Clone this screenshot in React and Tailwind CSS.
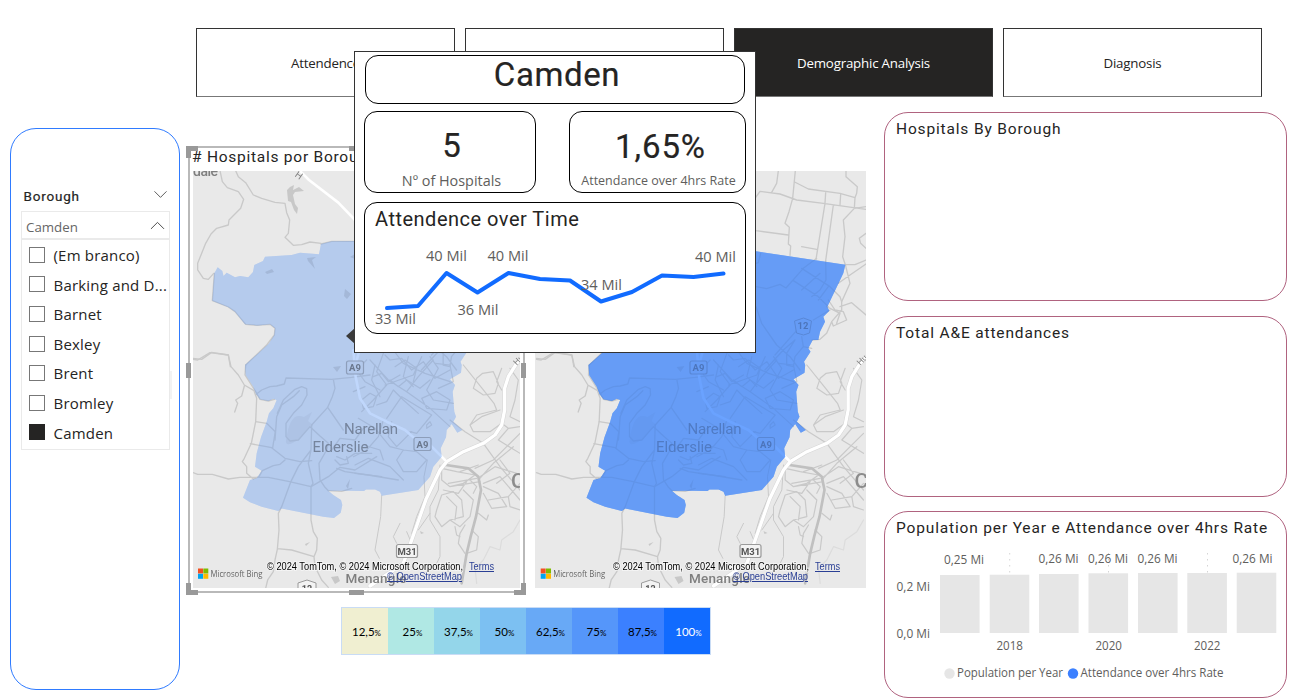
import React from "react";
import { ChevronDown, ChevronUp } from "lucide-react";

const DIN = "font-[Roboto,sans-serif]";
const MAP_FONT = "font-[Roboto,sans-serif]";

const BOROUGH =
  "M321 244 331.7 241.3 355 241 412.5 251.3 501.8 264.7 499.8 273.3 483.8 306.7 485.8 310.7 479.8 316.7 481.5 321.7 476.5 331.7 474.8 340 469.2 340 464.8 348.3 467 351.7 460.5 361.7 461.7 365 461 372.7 450 379.3 455 385 452.7 391.7 454.3 411.7 456 416.7 453.3 421.7 462.3 430 457.3 432.7 451.7 424 446.7 430 446 437.3 440.7 448.3 441.7 456.7 433.3 466.7 430 476.7 418.3 490 381.7 495.7 380 491.7 375 489.5 366 489.5 364 491 350 490.7 328.3 490.7 333.3 495 341 500 342.3 505 340.7 512.7 334 518 323.3 516.7 281.7 508.5 278.3 511 261.7 506.7 250 502.3 243 497.7 250 480 256.7 478.3 261.7 470.7 255 466.7 256.7 453.3 261 437.3 266.7 421.7 269 413.3 273.3 408.3 276.7 400 273.3 398.7 268.3 401 260 399.3 256 394 253.3 386.7 245.7 375 245 365 260 351.7 269 343.5 274.3 335 275 328.3 270 324.3 258 325.5 245 324.3 235 311.7 228 307 212.3 300.7 214.3 273.3 217.7 267.3 222.3 271 223.5 276 226.7 272.7 235 277.3 240 276 248.3 277.3 253 272 254.3 265 263 261 265 256.7 291.7 255 300 252.7 319 254.3Z";

function Shield({ x, y, w = 17, label, tone = "#f3f3f3" }) {
  return (
    <g>
      <rect x={x - w / 2} y={y - 6.5} width={w} height="13" rx="2" fill={tone} stroke="#9a9a9a" strokeWidth="1.2" />
      <text x={x} y={y + 3.6} textAnchor="middle" fontSize="9.5" fontWeight="700" fill="#555" className={MAP_FONT}>{label}</text>
    </g>
  );
}

function BingMap({ viewBox, width, tint, fill, fillOpacity, bingX, copyX, copyWidth }) {
  return (
    <svg width={width} height="417" viewBox={viewBox} className="isolate block bg-[#e9e9e9]">
      <rect x="190" y="171" width="340" height="417" fill="#e9e9e9" />
      <g fill="none" stroke="#c9c9c9" strokeLinejoin="round" strokeLinecap="round">
        <g transform="translate(185 140) scale(.33333)" strokeWidth="4">
          <path d="M105 92 112 125 127 143 160 155 176 178 167 205 132 240 130 255 95 265 78 282 62 310 38 370 38 390 55 415 70 418 86 400M152 92 160 110 182 128 205 165 230 175 270 187 300 190 305 218 314 240 310 280 300 292 325 316 350 314 375 306 408 310" />
          <path d="M408 312 440 304 510 304M88 400 82 482 130 501 150 515 182 553 215 556 255 553 270 565 268 585 245 615 182 675" />
          <path d="M344 92 372 120 460 188 510 240 560 330 610 420 600 500 540 570 510 680" stroke="#fff" strokeWidth="8" />
          <path d="M24 655 50 658 80 637 130 645 136 680" />
        </g>
        <g transform="translate(185 350) scale(.33333)" strokeWidth="4">
          <path d="M24 28 38 30 75 8 130 15 138 50 160 75 178 105 207 122 215 145 212 215 199 280 178 325 172 335 185 350 185 370 205 387M178 108 170 138 152 150 158 160 149 186M24 368 38 373 82 373 130 387 165 382 250 382 310 394 378 410 430 380 465 352 510 360 575 320" />
          <path d="M182 45 180 75 212 125 225 148 250 153 268 148M212 134 230 120 255 110 275 108 298 102 303 84 440 88 500 82 555 75M445 88 450 115 442 140 428 172 380 225M428 172 475 240M212 215 245 220 271 245 263 293M196 281 260 293 300 325 345 335 380 332M205 387 222 380 232 362 265 347 285 343 300 330" />
          <path d="M343 122 325 140 290 165 275 200 270 270M303 260 303 220 325 190 350 165 366 135 365 116 350 110 330 118 295 150 277 190M303 260 315 273 340 270 375 230 405 258 430 280 425 300 402 340 405 390 420 412 430 422" />
          <path d="M380 225 378 300 340 350 318 394 290 470 280 490 282 540 277 598 270 630 265 665 248 690 242 715M378 300 370 340 384 400 378 410 378 510 385 545 397 565 395 600 387 620 390 650 410 690 430 712M277 596 320 600 387 620" />
          <path d="M440 300 465 265 510 270 535 235M455 320 480 330 510 310 560 310M455 355 480 365 550 375 640 390M450 330 465 345 490 340 485 320M430 422 470 424 500 415" />
        </g>
        <g transform="translate(350 350) scale(.33333)" strokeWidth="3.6">
          <path d="M60 30 115 90 170 125 240 175 300 230M100 10 80 65 110 105 70 150 35 185M130 0 160 40 225 70 300 95M215 20 190 75 105 105M170 125 205 80 250 30M35 150 60 130 80 140 70 170 40 175 35 150M110 205 155 140 245 195 200 250 180 245M215 145 260 125 300 150 290 180 230 175 215 145M120 90 145 110 170 90 210 115 240 90M50 30 20 60 45 95 90 120M135 50 165 30 200 55 190 95M255 40 300 45 310 95 265 115" />
          <path d="M105 15 120 30 155 25 185 60 220 35 255 85 300 60M70 80 95 70 115 95 150 75M240 20 265 55 230 120 250 150 310 160M80 165 110 155 130 120 160 150 205 190M25 205 75 235 120 290 160 300M100 210 85 260 50 300 10 320M125 215 115 260 140 290 185 245M15 345 55 325 120 350 160 390M15 370 95 380M40 285 90 300 100 330M160 300 140 330 160 365 200 365 230 330 200 305 160 300M230 235 245 225 240 215 230 225 230 235M45 110 10 125M75 45 65 90 90 140M175 20 160 80 190 110" />
          <path d="M340 45 400 120 432 160 440 180 380 195 360 225 370 245 420 245 455 220M398 70 430 65 445 100 435 130 400 135 370 115 380 85 398 70M455 55 440 95 455 120M480 55 505 90 495 150 480 200 510 215M455 220 475 235 510 230M300 210 345 245 400 280 450 350 510 420M360 225 395 200 450 180M475 235 445 270 510 310M510 250 470 290 430 330 375 355" />
          <path d="M275 355 320 365 375 375 340 400 300 410 275 390 275 360M385 390 430 340 490 290M330 365 385 345M390 380 435 350 500 370M400 400 450 380 510 450M400 410 445 430 470 470 425 475 400 430M280 420 325 430 350 395M260 480 275 435 310 425 335 450 340 500 300 510 275 530 255 500 260 480M300 510 330 530 360 500 370 450 340 420M290 440 320 470 315 510M415 450 475 440 510 400M450 330 480 370 440 400M475 440 480 470 510 480M385 490 410 510 415 495M345 525 330 550 325 580 345 610M365 540 385 560 380 600 350 610M315 530 320 555 330 560M360 390 380 410 370 430M295 400 380 385M300 410 390 395" />
          <path d="M288 345 355 355 385 380 393 420 378 500 362 560 350 610 335 700" stroke="#c0c0c0" strokeWidth="8" />
          <path d="M95 437 92 500 75 600 88 625M232 330 222 380 225 440 200 500 185 550M270 345 265 420 240 470 240 510 270 560 270 620 255 650M150 520 130 560 140 580M170 545 185 580M240 490 205 540" strokeWidth="3" />
          <path d="M510 510 490 545 455 570 450 600 420 590 400 630 375 655 380 700" stroke="#dcdcdc" />
          <path d="M60 708 160 640 178 590 228 448 270 360 290 335 340 305 400 280 435 255 455 225 464 180 464 115 475 80 500 40 540 0" stroke="#d6d6d6" strokeWidth="13" />
          <path d="M60 708 160 640 178 590 228 448 270 360 290 335 340 305 400 280 435 255 455 225 464 180 464 115 475 80 500 40 540 0" stroke="#fff" strokeWidth="10" />
          <path d="M10 0 17 80 30 145 60 190 110 215 165 240 190 262 240 285 290 335" stroke="#fff" strokeWidth="8" />
        </g>
        <g transform="translate(396.5 140) scale(.33333)" strokeWidth="4">
          <path d="M115 92 110 130 95 157M166 92 158 175 147 215 135 250 148 262 145 312 152 318 150 346M164 126 205 147 300 160 345 173 350 160 352 140 318 110 318 92M20 210 60 154 120 162 170 180 250 190 378 208M257 158 255 190 228 358M302 163 300 195M345 173 343 205 378 200M280 195 257 362M343 205 310 240 315 290 308 350 316 374 330 430 305 485 305 510 275 545 280 558 320 540 310 515 285 510 265 480M20 265 48 272 145 285M185 320 230 328M378 280 358 295 362 310 378 325M316 374 345 374 378 360M295 430 330 405 378 372M300 500 335 488 378 525M260 500 300 520 290 550M216 600 240 598 260 580 275 545" />
          <path d="M48 440 80 446 120 433 138 444 190 385 230 355M62 340 55 368 48 370M185 385 270 440 300 470 305 485M160 422 235 470 265 500M240 400 185 450M265 440 235 480M257 362 258 420 240 450 215 470M48 500 65 550 110 615 150 650 180 690M165 600 130 630 75 690M185 590 190 620 165 650 160 680 140 675 140 640 165 600M220 540 270 510M190 620 215 625M180 560 105 645" />
        </g>
      </g>
      <g fill="#c8c8c8" stroke="none">
        <path d="M290 187 294 185 293 190 299 187 304 191 295 192 293 195 295 204 298 208 297 214 294 210 291 202 288 201 287 190Z" />
        <path d="M265 272 272 269 274 272 267 274ZM307 258 316 257 312 260 315 269 308 261ZM345 289 351 294 347 299 344 296ZM350 257 355 254V259ZM333 367 341 366 337 372ZM346 486 350 479 348 489ZM305 544 310 542 306 546ZM331 577 338 576 340 581 335 584ZM420 531 424 533 421 534Z" />
        <path d="M286 441C289 420 294 413 304 417L312 412 308 421 313 425 305 432 300 438C292 445 285 446 286 441Z" opacity=".4" />
      </g>
      <g fill="#7f7f7f" className={MAP_FONT}>
        <text x="193" y="176" fontSize="14" fontWeight="500" textLength="25">dale</text>
        <text x="294.5" y="177" fontSize="9.5" transform="rotate(35 296 176)">H</text>
        <text x="515.5" y="365" fontSize="8.5" transform="rotate(-45 517 364)">Hu</text>
        <text x="511" y="488" fontSize="21" fontWeight="500" fill="#8c8c8c">C</text>
        <text x="345.5" y="582.5" fontSize="13.5" fontWeight="500" textLength="61">Menangle</text>
      </g>
      <Shield x={355} y={367.5} label="A9" tone="#e6e6e6" />
      <Shield x={422.5} y={444} label="A9" tone="#e6e6e6" />
      <Shield x={407} y={551} w={21} label="M31" />
      <path d="M451 321 460 318 468 321 466 333 460 335 453 333Z" fill="#e6e6e6" stroke="#9a9a9a" />
      <text x="459.5" y="329" textAnchor="middle" fontSize="9.5" fontWeight="700" fill="#555" className={MAP_FONT}>12</text>
      <path d="M298 588V583L307 580 316 583V588" fill="#f3f3f3" stroke="#9a9a9a" />
      <text x="307" y="592" textAnchor="middle" fontSize="9" fontWeight="700" fill="#555" className={MAP_FONT}>12</text>
      <g fill="#6c6c6c" fontSize="15" className={MAP_FONT}>
        <text x="344" y="434.3" textLength="54">Narellan</text>
        <text x="312.5" y="452.3" textLength="56">Elderslie</text>
      </g>
      <path d={BOROUGH} fill={tint} className="mix-blend-multiply" />
      <path d={BOROUGH} fill={fill} fillOpacity={fillOpacity} />
      <g transform={`translate(${bingX} 568.5)`}>
        <path fill="#f25022" d="M0 0h5v5H0z" />
        <path fill="#7fba00" d="M5.3 0h5v5h-5z" />
        <path fill="#00a4ef" d="M0 5.3h5v5H0z" />
        <path fill="#ffb900" d="M5.3 5.3h5v5h-5z" />
        <text x="12.5" y="8.6" fontSize="9" fill="#666" textLength="52" lengthAdjust="spacingAndGlyphs" className="font-['Open_Sans',sans-serif]">Microsoft Bing</text>
      </g>
      <g fontSize="10" className="font-['Liberation_Sans',sans-serif]">
        <text x={copyX} y="570" textLength={copyWidth} lengthAdjust="spacingAndGlyphs" stroke="#f4f4f4" strokeWidth="2" paintOrder="stroke">© 2024 TomTom, © 2024 Microsoft Corporation,</text>
        <text x={copyX + 202} y="570" fill="#2a3f95" textDecoration="underline" textLength="25" lengthAdjust="spacingAndGlyphs">Terms</text>
        <text x={copyX + 120} y="580" fill="#2a3f95" textDecoration="underline" textLength="75" lengthAdjust="spacingAndGlyphs">© OpenStreetMap</text>
      </g>
    </svg>
  );
}

function Tab({ children, active }) {
  return (
    <div className={`flex h-[69px] w-[259px] items-center justify-center border border-[#333] border-b-[#777] pt-[2px] text-[13.3px] tracking-[-0.2px] ${active ? "bg-[#252423] text-white" : "bg-white text-[#252423]"}`}>
      {children}
    </div>
  );
}

const OPTIONS = ["(Em branco)", "Barking and D...", "Barnet", "Bexley", "Brent", "Bromley", "Camden"];

function Slicer() {
  return (
    <aside className="relative mt-[31px] ml-[10px] h-[562px] w-[170px] shrink-0 rounded-[26px] border border-[#2f7bff] pt-[56px] pl-[10px]">
      <span className="absolute top-[242px] left-[159px] h-7 w-[2px] bg-[#f3f3f3]" />
      <div className="flex h-[22px] items-center justify-between pr-[7px] pl-[2.5px]">
        <span className="font-[Roboto,sans-serif] text-[13.5px] tracking-[0.8px] text-[#252423] [-webkit-text-stroke:0.2px_#252423]">Borough</span>
        <ChevronDown size={23} strokeWidth={0.9} className="-mt-[3px] text-[#444]" />
      </div>
      <div className="mt-1 flex h-7 w-[149px] items-center justify-between border border-[#eaeaea] pr-0 pl-1 text-[13.3px] text-[#666]">
        <span className="pt-[5px]">Camden</span>
        <ChevronUp size={25} strokeWidth={0.9} className="-mr-px text-[#444]" />
      </div>
      <ul className="h-[211px] w-[149px] border border-[#eaeaea] pl-[7px]">
        {OPTIONS.map((o) => (
          <li key={o} className="flex h-[29.6px] items-center gap-[8.5px] whitespace-nowrap text-[15px] tracking-[0.2px] text-[#252423]">
            <span className={`size-4 shrink-0 border ${o === "Camden" ? "border-[#252423] bg-[#252423]" : "border-[#777]"}`} />
            <span className="pt-px">{o}</span>
          </li>
        ))}
      </ul>
    </aside>
  );
}

const HANDLES = [
  "left-0 -top-px h-3 w-[5px]", "left-0 -top-px h-[5px] w-3",
  "right-0 -top-px h-3 w-[5px]", "right-0 -top-px h-[5px] w-3",
  "left-0 bottom-0 h-3 w-[5px]", "left-0 bottom-0 h-[5px] w-3",
  "right-0 bottom-0 h-3 w-[5px]", "right-0 bottom-0 h-[5px] w-3",
  "left-[163px] -top-px h-[5px] w-[15px]", "left-[163px] bottom-0 h-[5px] w-[15px]",
  "left-0 top-[216px] h-[15px] w-[5px]", "right-0 top-[216px] h-[15px] w-[5px]",
];

const SCALE = [
  ["12,5", "bg-[#f0efd1] text-black"], ["25", "bg-[#b0e8e4] text-black"],
  ["37,5", "bg-[#94d6ea] text-black"], ["50", "bg-[#7cc0f2] text-black"],
  ["62,5", "bg-[#68a9f6] text-black"], ["75", "bg-[#5596fa] text-black"],
  ["87,5", "bg-[#3b80ff] text-black"], ["100", "bg-[#116bff] text-white"],
];

function Maps() {
  return (
    <main className="mt-[50px] ml-[6px] w-[680px] shrink-0">
      <div className="flex">
        <section className="relative h-[448px] w-[340px]">
          <div className="absolute -top-px right-px bottom-[2px] left-[2px] border-2 border-[#b9b9b9]" />
          {HANDLES.map((h) => <span key={h} className={`absolute bg-[#999] ${h}`} />)}
          <h2 className={`relative h-6 pl-[6px] text-[15.5px] leading-5 tracking-[0.75px] whitespace-nowrap text-[#252423] ${DIN}`}># Hospitals por Borough</h2>
          <div className="pl-[7px]">
            <BingMap viewBox="193 171 327 417" width="327" tint="#c6deff" fill="#b4cbf5" fillOpacity=".35" bingX={198} copyX={267} copyWidth={196} />
          </div>
        </section>
        <section className="ml-[9px] pt-6">
          <BingMap viewBox="191.5 171 331 417" width="331" tint="#70abff" fill="#669cff" fillOpacity=".6" bingX={197.2} copyX={269.5} copyWidth={196} />
        </section>
      </div>
      <div className="mt-3 ml-[155px] flex h-[48px] w-[370px] border border-[#c9dcf5] font-[Lato,sans-serif] text-[11.5px]">
        {SCALE.map(([v, c]) => (
          <div key={v} className={`flex flex-1 items-center justify-center pt-[2px] pl-[3px] ${c}`}>
            <span>{v}<span className="text-[8px]">%</span></span>
          </div>
        ))}
      </div>
    </main>
  );
}

const CARD = "rounded-[24px] border border-[#b0637f] pl-[11px] pt-[6px]";
const CARD_TITLE = `text-[15.5px] leading-5 tracking-[0.84px] whitespace-nowrap text-[#252423] ${DIN}`;

const BARS = [[940, 575], [989.7, 574.7], [1039, 574], [1088.5, 573.3], [1138, 573], [1187.3, 573], [1236.7, 572.7]];

function PopulationChart() {
  const label = (x, y, t, w) => <text key={`${x}${t}`} x={x} y={y} textLength={w} lengthAdjust="spacingAndGlyphs">{t}</text>;
  return (
    <svg width="385" height="142" viewBox="896 545 385 142" fontSize="12" fill="#605e5c" className="block font-['Open_Sans',sans-serif]">
      {[1009.7, 1108.5, 1207.5].map((x) => <path key={x} d={`M${x} 553V634`} stroke="#d5d5d5" strokeDasharray="1.5 4.5" />)}
      {BARS.map(([x, y]) => <rect key={x} x={x} y={y} width="39.6" height={633 - y} fill="#e6e6e6" />)}
      {label(944, 564, "0,25 Mi", 40)}
      {label(1038.5, 563, "0,26 Mi", 40)}
      {label(1088, 563, "0,26 Mi", 40)}
      {label(1137.5, 563, "0,26 Mi", 40)}
      {label(1232.5, 563, "0,26 Mi", 40)}
      {label(896.5, 591, "0,2 Mi", 33.5)}
      {label(896.5, 638, "0,0 Mi", 33.5)}
      {label(996.5, 650, "2018", 26.5)}
      {label(1095.5, 650, "2020", 26.5)}
      {label(1194, 650, "2022", 26.5)}
      <circle cx="949.5" cy="673.5" r="5.2" fill="#e6e6e6" />
      <circle cx="1073" cy="673.5" r="5.2" fill="#3b80ff" />
      {label(957, 677, "Population per Year", 106)}
      {label(1080.5, 677, "Attendance over 4hrs Rate", 143)}
    </svg>
  );
}

const LINE = "387,308 418,306 446.5,273 477.5,292.5 508.5,273 540,279 570,280.5 601,301.5 632,292 662,275.5 693.5,277 723.5,273.5";
const POINTS = [[426, 261, "40 Mil"], [487.5, 261, "40 Mil"], [695, 262, "40 Mil"], [581, 290, "34 Mil"], [457.5, 315, "36 Mil"], [375, 324, "33 Mil"]];

function Tooltip() {
  const big = "font-[Roboto,sans-serif] text-[33px] [-webkit-text-stroke:0.2px_#252423]";
  return (
    <div className="absolute top-[51px] left-[354px] h-[302px] w-[402px] border border-[#333] bg-white pt-[3px] pl-[9px] text-[#252423]">
      <span className="absolute top-[276px] -left-[9px] h-4 w-[9px] bg-[#3a3a3a] [clip-path:polygon(100%_0,100%_100%,0_50%)]" />
      <div className={`ml-px flex h-[49px] w-[380px] justify-center rounded-[13px] border border-black pl-1 leading-[37px] tracking-[0.6px] ${big}`}>Camden</div>
      <div className="mt-[7px] flex gap-[33px]">
        <div className="flex h-[82px] w-[172px] flex-col items-center rounded-[13px] border border-black pt-4 pl-[3px]">
          <span className={`leading-[36px] ${big}`}>5</span>
          <span className="pt-[7px] text-[14.4px] leading-5 text-[#605e5c]">Nº of Hospitals</span>
        </div>
        <div className="flex h-[82px] w-[177px] flex-col items-center rounded-[13px] border border-black pt-[17px] pl-[2px]">
          <span className={`pl-1 leading-[36px] tracking-[0.9px] ${big}`}>1,65%</span>
          <span className="pt-[7px] text-[12.5px] leading-[18px] whitespace-nowrap text-[#605e5c]">Attendance over 4hrs Rate</span>
        </div>
      </div>
      <div className="mt-[9px] h-[132px] w-[382px] rounded-[13px] border border-black pl-[10px]">
        <h3 className="h-8 pt-[3px] font-[Roboto,sans-serif] text-[20px] leading-[26px] tracking-[0.5px]">Attendence over Time</h3>
        <svg width="368" height="96" viewBox="375 235 368 96" className="block font-['Open_Sans',sans-serif]">
          <polyline points={LINE} fill="none" stroke="#116bff" strokeWidth="4" strokeLinecap="round" strokeLinejoin="round" />
          {POINTS.map(([x, y, t]) => <text key={x} x={x} y={y} fontSize="14.5" fill="#605e5c" textLength="41" lengthAdjust="spacingAndGlyphs">{t}</text>)}
        </svg>
      </div>
    </div>
  );
}

export default function App() {
  return (
    <div className="relative h-[698px] w-[1297px] overflow-hidden bg-white font-['Open_Sans',sans-serif]">
      <nav className="flex gap-[10px] pt-7 pl-[196px]">
        <Tab>Attendence</Tab>
        <Tab />
        <Tab active>Demographic Analysis</Tab>
        <Tab>Diagnosis</Tab>
      </nav>
      <div className="flex items-start">
        <Slicer />
        <Maps />
        <div className="mt-[15px] ml-[18px] w-[403px] shrink-0">
          <section className={`h-[189px] ${CARD}`}><h2 className={CARD_TITLE}>Hospitals By Borough</h2></section>
          <section className={`mt-[15px] h-[181px] ${CARD}`}><h2 className={CARD_TITLE}>Total A&amp;E attendances</h2></section>
          <section className={`mt-[14px] h-[187px] ${CARD}`}>
            <h2 className={CARD_TITLE}>Population per Year e Attendance over 4hrs Rate</h2>
            <div className="mt-[7px]"><PopulationChart /></div>
          </section>
        </div>
      </div>
      <Tooltip />
    </div>
  );
}
